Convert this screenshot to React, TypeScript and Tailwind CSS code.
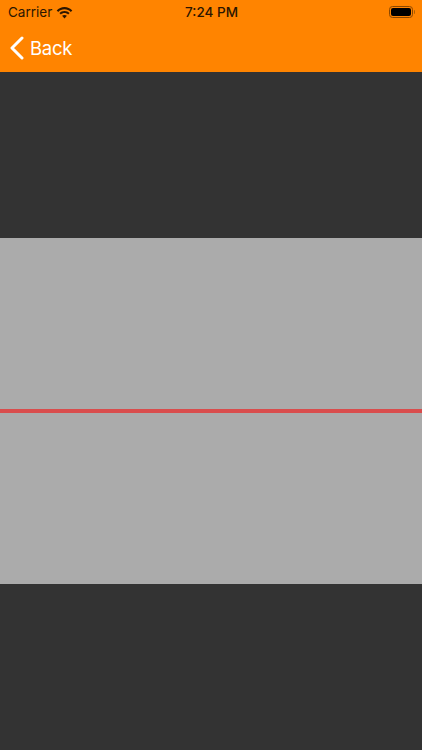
export default function App() {
  return (
    <div className="flex h-[750px] w-full flex-col overflow-hidden bg-[#333333] font-['Inter',sans-serif]">
      <header className="h-[72px] shrink-0 bg-[#ff8400]">
        <div className="flex h-6 items-center justify-between pl-2 pr-[7px] pt-px text-[#2b1600]">
          <div className="flex w-[140px] items-center gap-1">
            <span className="text-[13.5px] leading-none">Carrier</span>
            <svg width="17" height="12" viewBox="0 0 17 12" fill="currentColor">
              <path d="M8.5 2.3c2.5 0 4.7 1 6.3 2.6l1.5-1.5C14.3 1.3 11.5 0 8.5 0S2.7 1.3.7 3.4l1.5 1.5C3.8 3.3 6 2.3 8.5 2.3z" />
              <path d="M8.5 6.1c1.4 0 2.7.5 3.6 1.5l1.5-1.6C12.3 4.7 10.5 3.9 8.5 3.9s-3.8.8-5.1 2.1l1.5 1.6c.9-1 2.2-1.5 3.6-1.5z" />
              <path d="M8.5 7.9c-.9 0-1.7.3-2.4.9l2.4 2.7 2.4-2.7c-.7-.6-1.5-.9-2.4-.9z" />
            </svg>
          </div>
          <span className="text-[13.5px] font-medium leading-none">7:24 PM</span>
          <div className="flex w-[140px] justify-end">
            <div className="-mt-px flex items-center gap-px">
              <div className="h-[12px] w-[24px] rounded-[3.5px] border border-[#8a4700] p-px">
                <div className="h-full w-full rounded-[2px] bg-black" />
              </div>
              <div className="h-1 w-px rounded-r-sm bg-[#b05f00]" />
            </div>
          </div>
        </div>
        <div className="flex h-12 items-center gap-[6px] pl-[10px] text-white">
          <svg width="14" height="24" viewBox="0 0 14 24" fill="none" stroke="currentColor" strokeWidth="3" strokeLinecap="round" strokeLinejoin="round">
            <path d="M12 2 2 12l10 10" />
          </svg>
          <span className="text-[18.5px] leading-none tracking-[-0.3px]">Back</span>
        </div>
      </header>
      <div className="h-[166px] shrink-0 bg-[#333333]" />
      <div className="flex h-[346px] shrink-0 flex-col justify-center bg-[#ababab]">
        <div className="h-1 bg-[#d94d4d]" />
      </div>
      <div className="h-[166px] shrink-0 bg-[#333333]" />
    </div>
  )
}
